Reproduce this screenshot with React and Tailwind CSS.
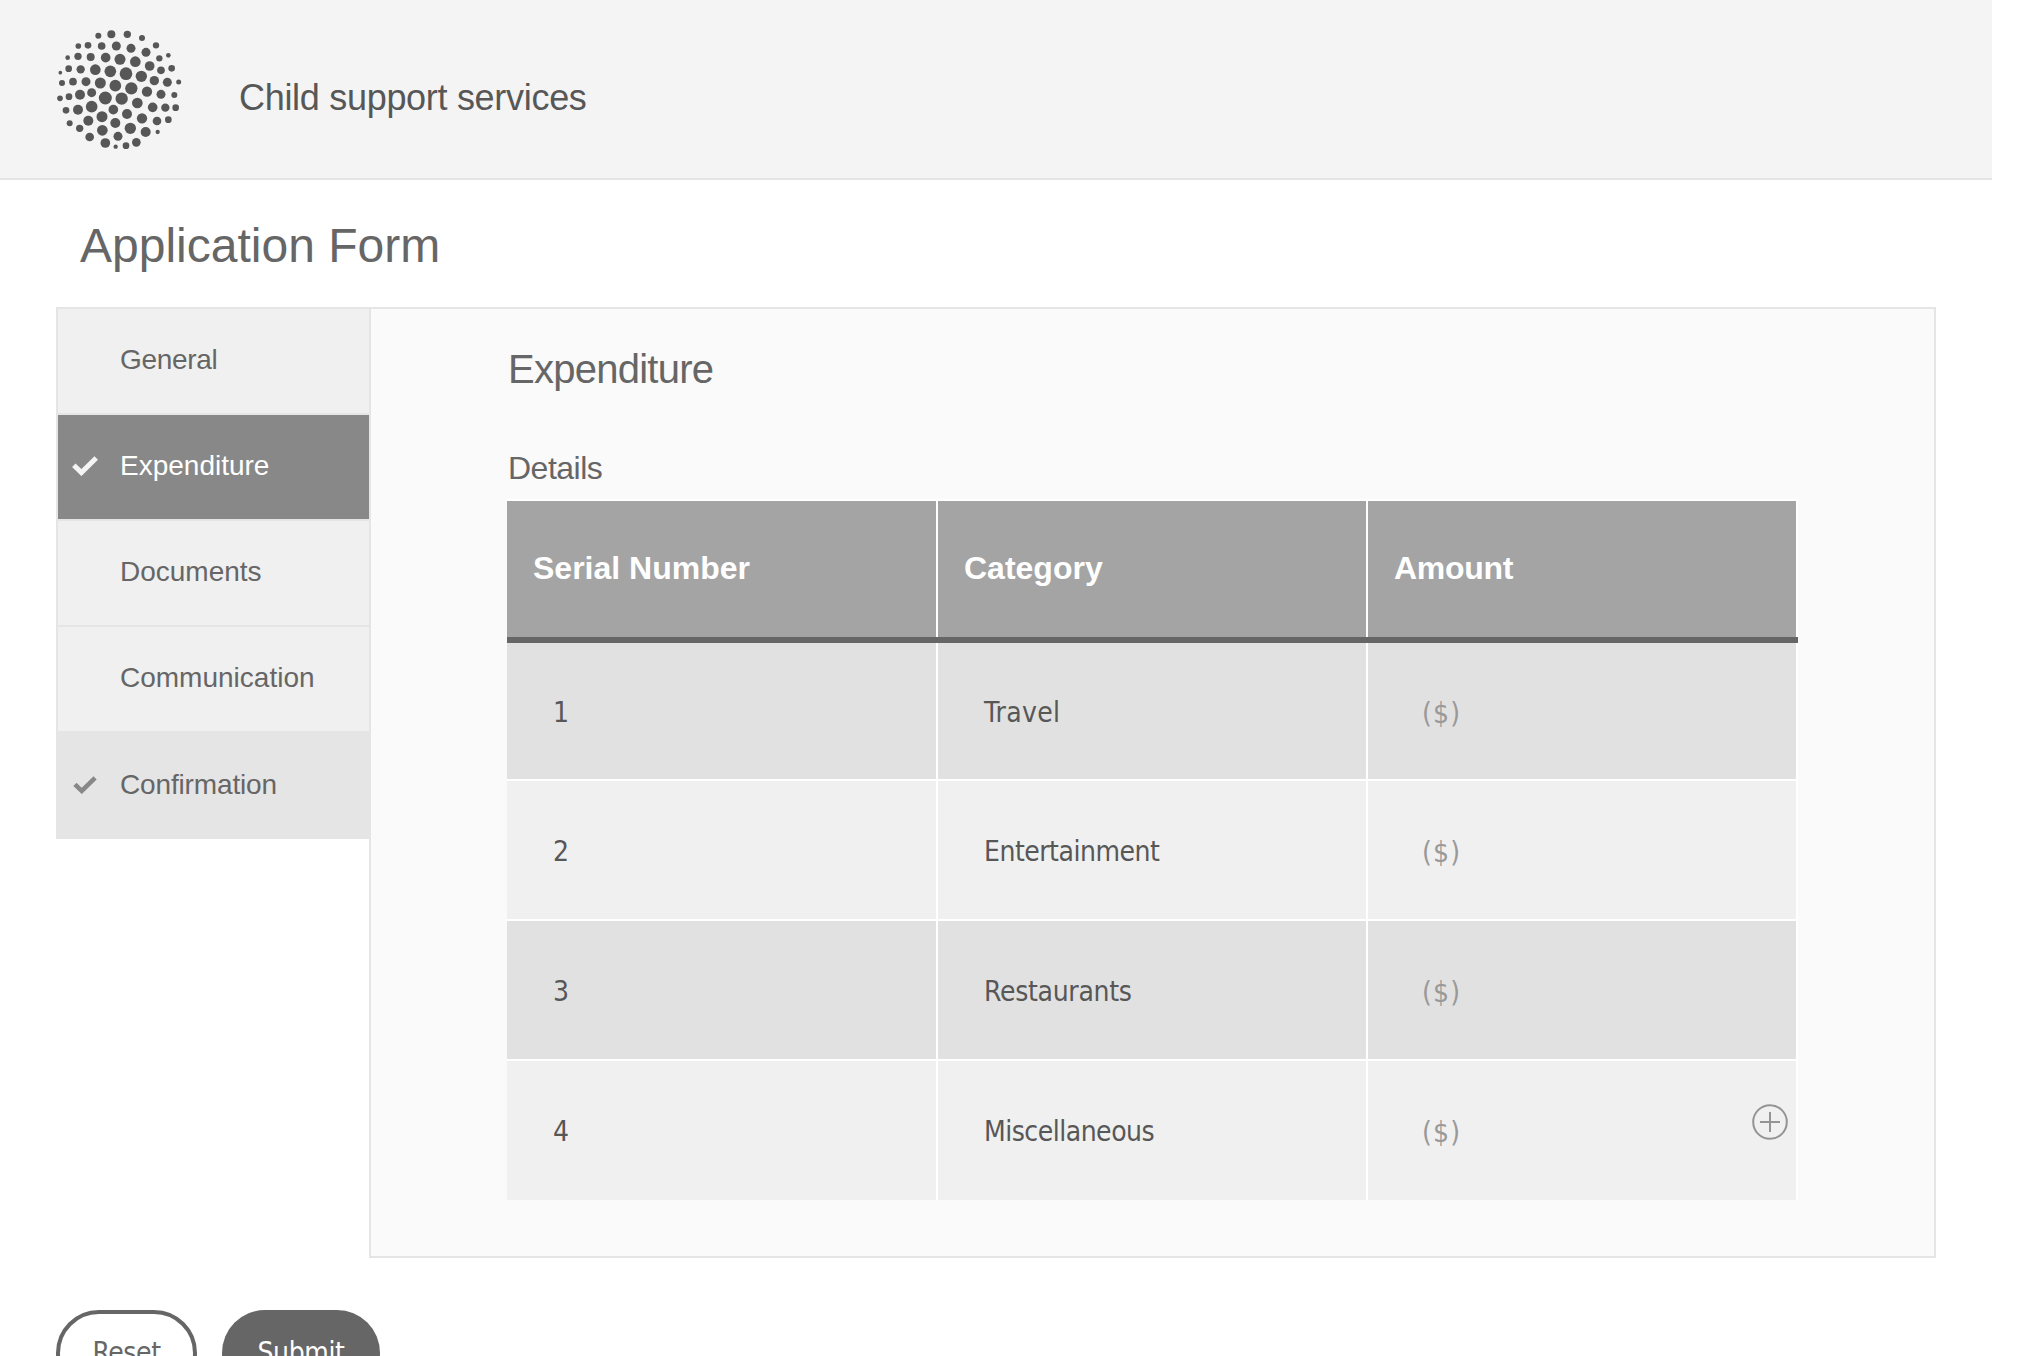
const DOTS = [
  [145, 47, 9], [184, 43, 12], [232, 43, 11], [276, 54, 9], [318, 76, 9.5], [355, 106, 7], [365, 145, 10], [386, 186, 7.5], [373, 225, 9],
  [85, 78, 8.5], [114, 76, 10], [155, 78, 11.5], [199, 78, 13.5], [243, 85, 13.5], [288, 97, 13.5], [328, 115, 9.5], [333, 151, 11.5],
  [53, 113, 7], [84, 109, 11], [122, 111, 12], [167, 113, 14.5], [210, 118, 16.5], [256, 125, 16], [299, 138, 14.5], [313, 182, 14], [352, 187, 13.5],
  [31, 158, 5.5], [56, 146, 10], [92, 148, 12.5], [136, 149, 16], [181, 154, 17.5], [228, 161, 19], [274, 169, 17], [291, 215, 15.5], [333, 223, 13.5],
  [36, 189, 9], [69, 185, 11.5], [108, 185, 13.5], [151, 189, 16.5], [196, 197, 17.5], [244, 205, 18.5], [262, 249, 16], [308, 262, 14.5], [346, 263, 12.5], [377, 263, 10],
  [30, 235, 8.5], [57, 230, 10], [90, 224, 15], [125, 218, 13.5], [166, 234, 19.5], [215, 236, 18.5], [190, 269, 14.5], [231, 282, 15], [276, 295, 15.5], [321, 303, 13], [355, 299, 10],
  [48, 271, 10], [84, 269, 15], [125, 260, 17.5], [156, 290, 16.5], [115, 302, 15], [196, 309, 15], [241, 325, 17], [287, 336, 15], [323, 336, 6.5],
  [59, 310, 9], [89, 325, 11], [157, 331, 16], [119, 351, 13], [204, 349, 13.5], [166, 369, 14.5], [197, 380, 6.5], [228, 377, 10], [259, 367, 13],
];

const NAV = [
  { label: 'General', tracking: 'tracking-[-0.3px]' },
  { label: 'Expenditure', tracking: 'tracking-normal', active: true, check: true },
  { label: 'Documents', tracking: 'tracking-normal' },
  { label: 'Communication', tracking: 'tracking-normal' },
  { label: 'Confirmation', tracking: 'tracking-[-0.15px]', done: true, check: true },
];

const ROWS = [
  ['1', 'Travel', 'tracking-[0.3px]', 'h-[136px] bg-[#e1e1e1]'],
  ['2', 'Entertainment', 'tracking-[-0.5px]', 'h-[138px] bg-[#f0f0f0]'],
  ['3', 'Restaurants', 'tracking-[-0.3px]', 'h-[138px] bg-[#e1e1e1]'],
  ['4', 'Miscellaneous', 'tracking-[-0.5px]', 'h-[139px] bg-[#f0f0f0]'],
];

function Logo() {
  return (
    <svg className="ml-[50px] mt-[20px] size-[140px] shrink-0" viewBox="0 0 420 420" fill="#575757">
      {DOTS.map(([x, y, r]) => (
        <circle key={`${x}-${y}`} cx={x} cy={y} r={r} />
      ))}
    </svg>
  );
}

function Check({ className }) {
  return (
    <svg className={className} viewBox="0 0 26 20" fill="none" stroke="currentColor" strokeWidth="5">
      <path d="M1.8 9.2 L9.4 16.6 L24.2 2" />
    </svg>
  );
}

function NavItem({ item, last }) {
  const tone = item.active
    ? 'bg-[#888888] text-white'
    : item.done
      ? 'bg-[#e5e5e5] text-[#666666]'
      : 'bg-[#f0f0f0] text-[#666666]';
  return (
    <li className={`flex h-[106px] items-center border-[#e5e5e5] pb-[2px] ${last ? '' : 'border-b-2'} ${tone}`}>
      <span className="flex w-[62px] shrink-0 pl-[14px]">
        {item.check && (
          <Check className={item.active ? 'h-5 w-[26px] text-[#f4f4f4]' : 'ml-px h-[18px] w-6 text-[#888888]'} />
        )}
      </span>
      <span className={item.tracking}>{item.label}</span>
    </li>
  );
}

function PlusCircle() {
  return (
    <svg className="absolute right-[8px] top-[43px] size-9" viewBox="0 0 36 36" fill="none" stroke="#949494" strokeWidth="2">
      <circle cx="18" cy="18" r="16.8" />
      <path d="M8 18H28M18 8V28" />
    </svg>
  );
}

export default function App() {
  return (
    <div className="h-[1356px] w-[2026px] overflow-hidden bg-white font-['Liberation_Sans',Arial,sans-serif] text-[#666666]">
      <header className="flex h-[180px] w-[1992px] border-b-2 border-[#e5e5e5] bg-[#f4f4f4]">
        <Logo />
        <p className="ml-[49px] mt-[77px] text-[36px] leading-[42px] tracking-[-0.3px] text-[#575757]">Child support services</p>
      </header>

      <h1 className="ml-[80px] mt-[38px] h-[89px] text-[48px] leading-[56px]">Application Form</h1>

      <main className="flex pl-[56px]">
        <ul className="h-[532px] w-[313px] border-l-2 border-t-2 border-[#e5e5e5] text-[28px]">
          {NAV.map((item, i) => (
            <NavItem key={item.label} item={item} last={i === NAV.length - 1} />
          ))}
        </ul>

        <section className="h-[951px] w-[1567px] border-2 border-[#e5e5e5] bg-[#fafafa] pl-[136px] pt-[37px]">
          <h2 className="ml-px text-[40px] leading-[46px] tracking-[-0.75px]">Expenditure</h2>
          <h3 className="ml-px mt-[58px] text-[32px] leading-[36px] tracking-[-0.5px]">Details</h3>

          <div className="mt-[13px] w-[1291px] border-t-2 border-white">
            <div className="grid h-[142px] grid-cols-[431px_430px_430px] border-b-[6px] border-[#666666] bg-[#a4a4a4] text-[32px] font-bold text-white">
              <div className="flex items-center border-r-2 border-white pb-[2px] pl-[26px]">Serial Number</div>
              <div className="flex items-center border-r-2 border-white pb-[2px] pl-[26px]">Category</div>
              <div className="flex items-center border-r-2 border-white pb-[2px] pl-[26px] tracking-[-0.3px]">Amount</div>
            </div>
            <div className="flex flex-col gap-[2px] bg-white font-['DejaVu_Sans_Condensed','DejaVu_Sans',sans-serif] text-[28px] text-[#575757]">
              {ROWS.map(([num, category, tracking, rowStyle], i) => (
                <div key={num} className={`grid grid-cols-[431px_430px_430px] ${rowStyle}`}>
                  <div className="flex items-center border-r-2 border-white pl-[46px] pt-[3px]">{num}</div>
                  <div className={`flex items-center border-r-2 border-white pl-[46px] pt-[3px] ${tracking}`}>{category}</div>
                  <div className="relative flex items-center border-r-2 border-white pl-[54px] pt-[5px] tracking-[1.2px] text-[#999999]">
                    ($)
                    {i === ROWS.length - 1 && <PlusCircle />}
                  </div>
                </div>
              ))}
            </div>
          </div>
        </section>
      </main>

      <footer className="mt-[52px] flex gap-[25px] pl-[56px] font-['DejaVu_Sans_Condensed','DejaVu_Sans',sans-serif] text-[28px] tracking-[-0.4px]">
        <button className="h-[86px] w-[141px] rounded-[43px] border-4 border-[#666666] bg-white">Reset</button>
        <button className="h-[86px] w-[158px] rounded-[43px] bg-[#666666] text-white">Submit</button>
      </footer>
    </div>
  );
}
